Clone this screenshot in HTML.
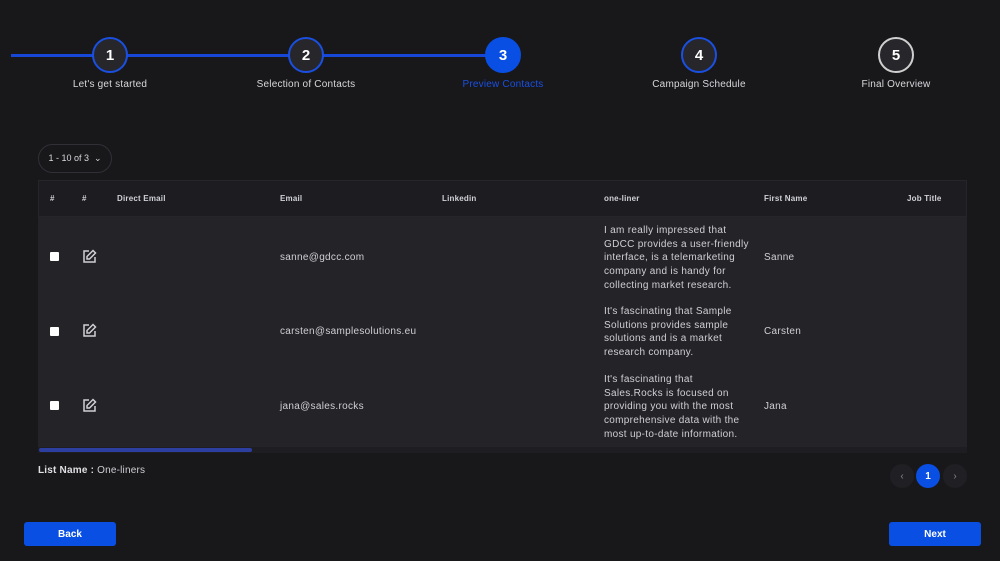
<!DOCTYPE html>
<html><head><meta charset="utf-8"><style>
*{margin:0;padding:0;box-sizing:border-box}
body{width:1000px;height:561px;background:#18181b;font-family:"Liberation Sans",sans-serif;color:#cfcfd4;position:relative;overflow:hidden}
.a{position:absolute}
.line{position:absolute;height:3px;background:#1747d6;top:54px}
.c{position:absolute;width:36px;height:36px;border-radius:50%;border:2.5px solid #1a4fe0;background:#26262b;color:#fff;font-weight:bold;font-size:15px;display:flex;align-items:center;justify-content:center;top:37px}
.lbl{position:absolute;top:79px;font-size:10px;width:160px;text-align:center;color:#d8d8dc;letter-spacing:0.2px}
.th{position:absolute;top:194px;font-size:8px;font-weight:bold;color:#d0d0d8;letter-spacing:0.2px}
.td{position:absolute;font-size:10px;color:#cfcfd4;letter-spacing:0.3px}
.ol{position:absolute;left:604px;font-size:10px;line-height:13.7px;white-space:nowrap;color:#cfcfd4;letter-spacing:0.3px}
.cb{position:absolute;left:50px;width:9px;height:9px;background:#fff;border-radius:1px}
.btn{position:absolute;top:522px;width:92px;height:24px;background:#0a4fe4;border-radius:3px;color:#fff;font-weight:bold;font-size:10px;display:flex;align-items:center;justify-content:center}
</style></head><body>
<div class="line" style="left:11px;width:490px"></div>
<div class="c" style="left:92px">1</div>
<div class="c" style="left:288px">2</div>
<div class="c" style="left:485px;background:#0a4fe4;border-color:#0a4fe4">3</div>
<div class="c" style="left:681px">4</div>
<div class="c" style="left:878px;border-color:#cfcfcf">5</div>
<div class="lbl" style="left:30px">Let's get started</div>
<div class="lbl" style="left:226px">Selection of Contacts</div>
<div class="lbl" style="left:423px;color:#1a4fe0">Preview Contacts</div>
<div class="lbl" style="left:619px">Campaign Schedule</div>
<div class="lbl" style="left:816px">Final Overview</div>

<div class="a" style="left:38px;top:144px;width:74px;height:29px;border:1px solid #303036;border-radius:15px;font-size:9px;color:#d8d8dc;display:flex;align-items:center;justify-content:center">1 - 10 of 3 &nbsp;⌄</div>

<div class="a" style="left:38px;top:180px;width:929px;height:37px;background:#1d1d21;border:1px solid #26262a"></div>
<div class="a" style="left:38px;top:217px;width:929px;height:230px;background:#242428"></div>
<div class="a" style="left:38px;top:447px;width:929px;height:6px;background:#1e1e22"></div>
<div class="a" style="left:39px;top:448px;width:213px;height:4px;background:#2c3fa0;border-radius:2px"></div>

<div class="th" style="left:50px">#</div>
<div class="th" style="left:82px">#</div>
<div class="th" style="left:117px">Direct Email</div>
<div class="th" style="left:280px">Email</div>
<div class="th" style="left:442px">Linkedin</div>
<div class="th" style="left:604px">one-liner</div>
<div class="th" style="left:764px">First Name</div>
<div class="th" style="left:907px">Job Title</div>

<div class="cb" style="top:252px"></div>
<div class="cb" style="top:327px"></div>
<div class="cb" style="top:401px"></div>
<svg class="a" style="left:82px;top:249px" width="15" height="15" viewBox="0 0 15 15" fill="none" stroke="#cfcfd4" stroke-width="1.5"><path d="M7 2H2v11h11V8"/><path d="M11 1.5l2.5 2.5L7.5 10H5V7.5z"/></svg>
<svg class="a" style="left:82px;top:323px" width="15" height="15" viewBox="0 0 15 15" fill="none" stroke="#cfcfd4" stroke-width="1.5"><path d="M7 2H2v11h11V8"/><path d="M11 1.5l2.5 2.5L7.5 10H5V7.5z"/></svg>
<svg class="a" style="left:82px;top:398px" width="15" height="15" viewBox="0 0 15 15" fill="none" stroke="#cfcfd4" stroke-width="1.5"><path d="M7 2H2v11h11V8"/><path d="M11 1.5l2.5 2.5L7.5 10H5V7.5z"/></svg>

<div class="td" style="left:280px;top:252px">sanne@gdcc.com</div>
<div class="td" style="left:280px;top:326px">carsten@samplesolutions.eu</div>
<div class="td" style="left:280px;top:401px">jana@sales.rocks</div>
<div class="td" style="left:764px;top:252px">Sanne</div>
<div class="td" style="left:764px;top:326px">Carsten</div>
<div class="td" style="left:764px;top:401px">Jana</div>
<div class="ol" style="top:224px">I am really impressed that<br>GDCC provides a user-friendly<br>interface, is a telemarketing<br>company and is handy for<br>collecting market research.</div>
<div class="ol" style="top:305px">It's fascinating that Sample<br>Solutions provides sample<br>solutions and is a market<br>research company.</div>
<div class="ol" style="top:373px">It's fascinating that<br>Sales.Rocks is focused on<br>providing you with the most<br>comprehensive data with the<br>most up-to-date information.</div>

<div class="a" style="left:38px;top:465px;font-size:10px;letter-spacing:0.2px"><b style="color:#e0e0e4">List Name :</b> One-liners</div>

<div class="a" style="left:890px;top:464px;width:24px;height:24px;border-radius:50%;background:#202024;color:#888;font-size:10px;display:flex;align-items:center;justify-content:center">‹</div>
<div class="a" style="left:916px;top:464px;width:24px;height:24px;border-radius:50%;background:#0a4fe4;color:#fff;font-weight:bold;font-size:10px;display:flex;align-items:center;justify-content:center">1</div>
<div class="a" style="left:943px;top:464px;width:24px;height:24px;border-radius:50%;background:#202024;color:#888;font-size:10px;display:flex;align-items:center;justify-content:center">›</div>

<div class="btn" style="left:24px">Back</div>
<div class="btn" style="left:889px">Next</div>
</body></html>
